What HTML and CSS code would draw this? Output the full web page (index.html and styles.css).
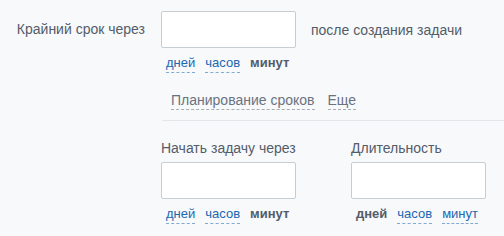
FILE: index.html
```html
<!DOCTYPE html>
<html>
<head>
<meta charset="utf-8">
<link rel="stylesheet" href="styles.css">
</head>
<body>
<div class="page">
  <div class="row">
    <div class="label">Крайний срок через</div>
    <div class="field">
      <div class="inline">
        <input class="box" type="text">
        <span class="after">после создания задачи</span>
      </div>
      <div class="units">
        <span class="link">дней</span>
        <span class="link">часов</span>
        <span class="bold">минут</span>
      </div>
    </div>
  </div>
  <div class="tabs">
    <span class="tab">Планирование сроков</span>
    <span class="tab">Еще</span>
  </div>
  <div class="sep"></div>
  <div class="cols">
    <div class="col">
      <div class="title">Начать задачу через</div>
      <input class="box" type="text">
      <div class="units">
        <span class="link">дней</span>
        <span class="link">часов</span>
        <span class="bold">минут</span>
      </div>
    </div>
    <div class="col">
      <div class="title">Длительность</div>
      <input class="box" type="text">
      <div class="units">
        <span class="bold">дней</span>
        <span class="link">часов</span>
        <span class="link">минут</span>
      </div>
    </div>
  </div>
</div>
</body>
</html>
```
FILE: styles.css
```css
html, body {
  margin: 0;
  padding: 0;
  background: #f8f9fb;
}
.page {
  font-family: "Liberation Sans", Arial, sans-serif;
  font-size: 14px;
  color: #535c69;
  padding-top: 11px;
}
.row {
  display: flex;
}
.label {
  width: 145px;
  padding-right: 16px;
  text-align: right;
  line-height: 37px;
  box-sizing: content-box;
}
.inline {
  display: flex;
  align-items: center;
}
.box {
  display: block;
  width: 135px;
  height: 37px;
  box-sizing: border-box;
  border: 1px solid #c6cdd3;
  border-radius: 2px;
  background: #fff;
  margin: 0;
  padding: 0 8px;
  outline: none;
}
.after {
  margin-left: 15px;
}
.units {
  display: flex;
  gap: 10px;
  padding-left: 5px;
  margin-top: 7px;
  line-height: 16px;
  font-size: 13px;
}
.link {
  color: #2067b0;
  border-bottom: 1px dashed rgba(32, 103, 176, 0.55);
  padding-bottom: 1px;
}
.bold {
  font-weight: bold;
}
.tabs {
  display: flex;
  gap: 13px;
  margin-left: 171px;
  margin-top: 19px;
  line-height: 17px;
  color: #6a737f;
}
.tab {
  border-bottom: 1px dashed #a8adb4;
}
.sep {
  margin-left: 162px;
  margin-top: 10px;
  height: 1px;
  background: #e4e7ea;
}
.cols {
  display: flex;
  gap: 55px;
  margin-left: 161px;
  margin-top: 19px;
}
.col {
  width: 135px;
}
.title {
  line-height: 17px;
  margin-bottom: 5px;
}
```
